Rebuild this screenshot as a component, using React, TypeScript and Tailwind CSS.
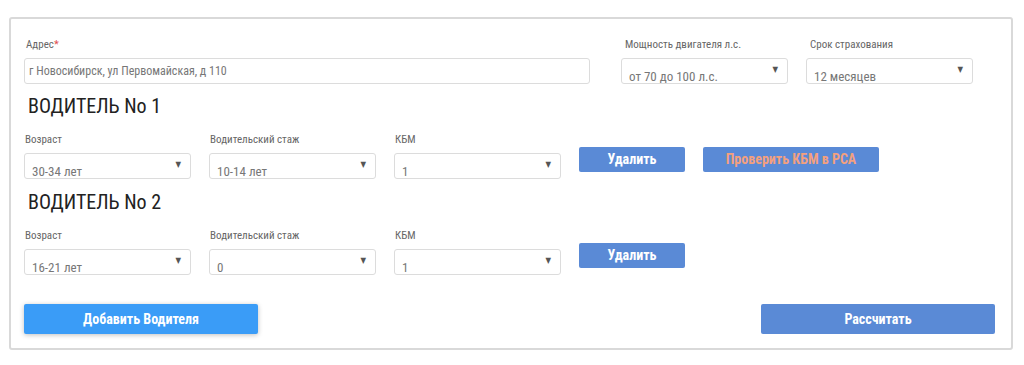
const font = "font-['Roboto_Condensed','Liberation_Sans_Narrow','DejaVu_Sans_Condensed',sans-serif]"

function Select({ value, w = "w-[167px]" }: { value: string; w?: string }) {
  return (
    <div className={`relative ${w} h-[26px] rounded-[3px] border border-[#dcdcdc] bg-white overflow-hidden`}>
      <span className="absolute left-[7px] top-[10px] text-[13px] leading-[16px] text-[#777]">{value}</span>
      <span className="absolute right-[9px] top-[5px] text-[8px] text-[#555]">▼</span>
    </div>
  )
}

function Field({ label, value }: { label: string; value: string }) {
  return (
    <div className="flex flex-col">
      <div className="h-[16px] text-[11px] leading-[16px] text-[#666] pl-[1px]">{label}</div>
      <div className="mt-[5px]">
        <Select value={value} />
      </div>
    </div>
  )
}

function Driver({ n, age, exp, check }: { n: number; age: string; exp: string; check?: boolean }) {
  return (
    <div>
      <h2 className="pl-[4px] text-[20px] leading-[24px] text-[#222]">ВОДИТЕЛЬ No {n}</h2>
      <div className="mt-[14px] flex items-end gap-[18px]">
        <Field label="Возраст" value={age} />
        <Field label="Водительский стаж" value={exp} />
        <Field label="КБМ" value="1" />
        <button className="mb-[7px] w-[106px] h-[25px] rounded-[2px] bg-[#5a8ad6] text-[14px] font-bold text-white">
          Удалить
        </button>
        {check && (
          <button className="mb-[7px] w-[176px] h-[25px] rounded-[2px] bg-[#5a8ad6] text-[14px] font-bold text-[#f3a07e]">
            Проверить КБМ в РСА
          </button>
        )}
      </div>
    </div>
  )
}

export default function App() {
  return (
    <div className={`w-[1024px] h-[365px] bg-white pt-[17px] pl-[9px] ${font}`}>
      <div className="w-[1004px] h-[333px] rounded-[3px] border-2 border-[#d9d9d9] pl-[13px] pr-[16px] pt-[18px]">
        <div className="flex">
          <div className="flex flex-col">
            <div className="h-[16px] text-[11px] leading-[16px] text-[#666] pl-[2px]">
              Адрес<span className="text-[#e05050]">*</span>
            </div>
            <div className="mt-[5px] w-[566px] h-[26px] rounded-[3px] border border-[#dcdcdc] pl-[4px] text-[12px] leading-[24px] text-[#777]">
              г Новосибирск, ул Первомайская, д 110
            </div>
          </div>
          <div className="ml-[31px] flex gap-[18px]">
            <div className="flex flex-col">
              <div className="h-[16px] text-[11px] leading-[16px] text-[#666] pl-[4px]">Мощность двигателя л.с.</div>
              <div className="mt-[5px]">
                <Select value="от 70 до 100 л.с." />
              </div>
            </div>
            <div className="flex flex-col">
              <div className="h-[16px] text-[11px] leading-[16px] text-[#666] pl-[4px]">Срок страхования</div>
              <div className="mt-[5px]">
                <Select value="12 месяцев" />
              </div>
            </div>
          </div>
        </div>

        <div className="mt-[10px]">
          <Driver n={1} age="30-34 лет" exp="10-14 лет" check />
        </div>
        <div className="mt-[11px]">
          <Driver n={2} age="16-21 лет" exp="0" />
        </div>

        <div className="mt-[29px] flex justify-between">
          <button className="w-[234px] h-[30px] rounded-[2px] bg-[#3a9cf7] text-[14px] font-bold text-white shadow-[0_1px_5px_rgba(0,0,0,0.25)]">
            Добавить Водителя
          </button>
          <button className="w-[234px] h-[30px] rounded-[2px] bg-[#5a8ad6] text-[14px] font-bold text-white">
            Рассчитать
          </button>
        </div>
      </div>
    </div>
  )
}
